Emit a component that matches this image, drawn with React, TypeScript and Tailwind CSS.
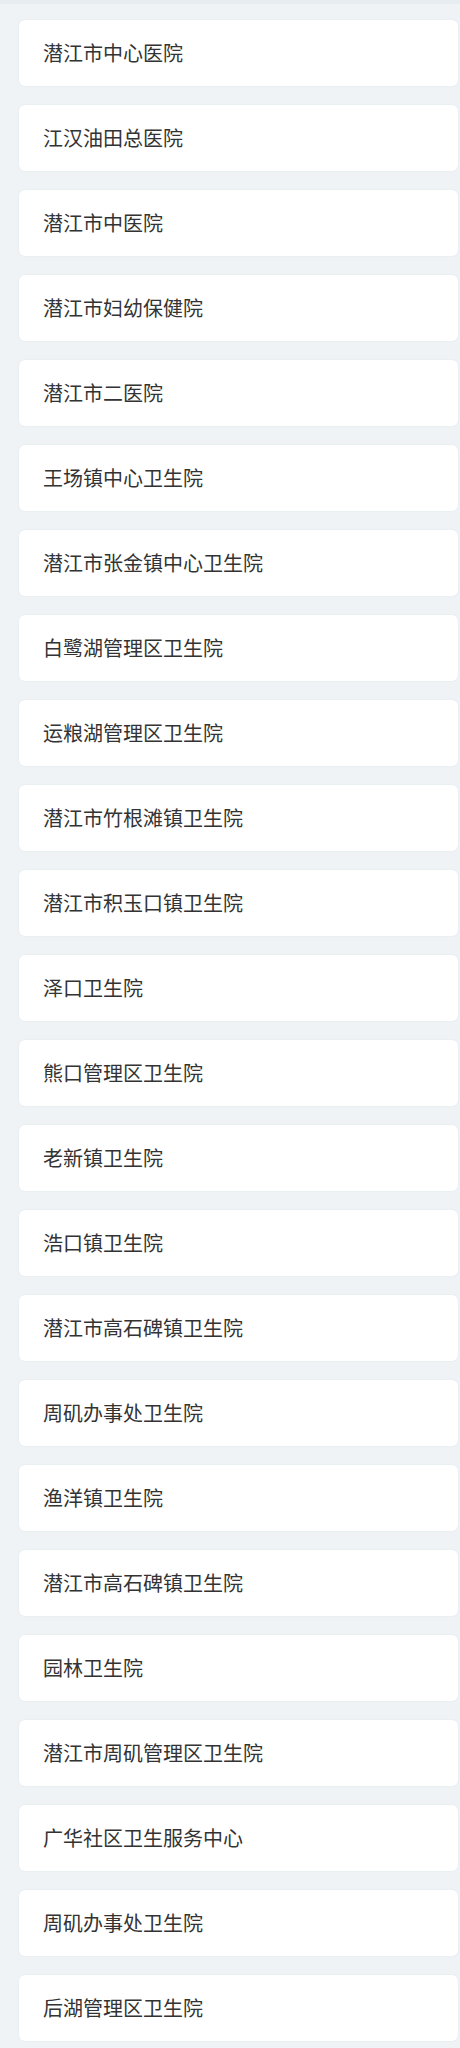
const hospitals = [
  "潜江市中心医院",
  "江汉油田总医院",
  "潜江市中医院",
  "潜江市妇幼保健院",
  "潜江市二医院",
  "王场镇中心卫生院",
  "潜江市张金镇中心卫生院",
  "白鹭湖管理区卫生院",
  "运粮湖管理区卫生院",
  "潜江市竹根滩镇卫生院",
  "潜江市积玉口镇卫生院",
  "泽口卫生院",
  "熊口管理区卫生院",
  "老新镇卫生院",
  "浩口镇卫生院",
  "潜江市高石碑镇卫生院",
  "周矶办事处卫生院",
  "渔洋镇卫生院",
  "潜江市高石碑镇卫生院",
  "园林卫生院",
  "潜江市周矶管理区卫生院",
  "广华社区卫生服务中心",
  "周矶办事处卫生院",
  "后湖管理区卫生院",
];

export default function App() {
  return (
    <main
      className="min-h-[2048px] border-t-4 border-[#e7ecf0] bg-[#eff3f6] text-[#333]"
      style={{ fontFamily: '"Noto Sans CJK SC", "Noto Sans", sans-serif' }}
    >
      <ul className="flex flex-col gap-[19px] pb-6 pl-[19px] pr-[2px] pt-4">
        {hospitals.map((name, i) => (
          <li
            key={i}
            className="flex h-[66px] items-center rounded-md bg-white pl-6 text-[20px] leading-none shadow-[0_0_2px_rgba(40,60,80,0.08)]"
          >
            {name}
          </li>
        ))}
      </ul>
    </main>
  );
}
